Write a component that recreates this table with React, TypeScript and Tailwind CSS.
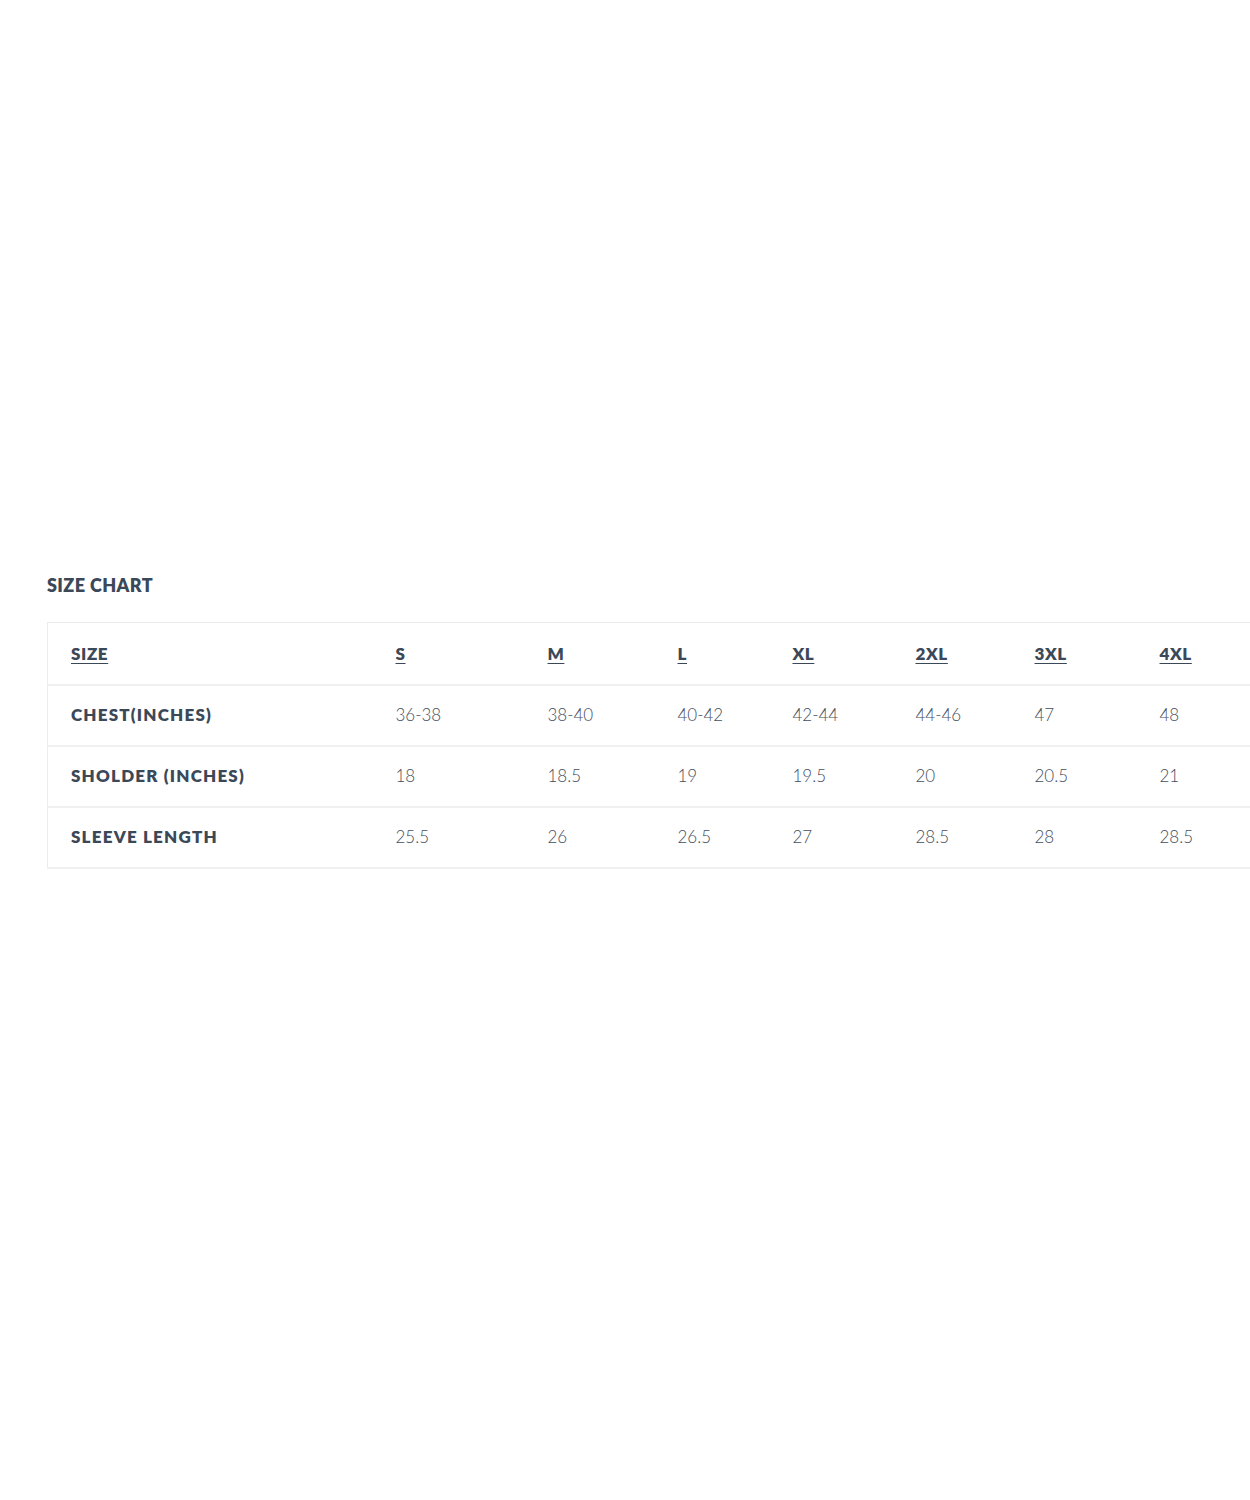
const headers = ['SIZE', 'S', 'M', 'L', 'XL', '2XL', '3XL', '4XL'];

const rows = [
  ['CHEST(INCHES)', '36-38', '38-40', '40-42', '42-44', '44-46', '47', '48'],
  ['SHOLDER (INCHES)', '18', '18.5', '19', '19.5', '20', '20.5', '21'],
  ['SLEEVE LENGTH', '25.5', '26', '26.5', '27', '28.5', '28', '28.5'],
];

// column widths read off the screenshot; last one runs past the viewport
const widths = ['w-[325px]', 'w-[152px]', 'w-[130px]', 'w-[115px]', 'w-[123px]', 'w-[119px]', 'w-[125px]', 'w-[125px]'];

export default function App() {
  return (
    <div className="min-h-[1500px] w-[1250px] overflow-hidden bg-white font-['Lato','Liberation_Sans',sans-serif] text-[#3b4858]">
      <div className="pt-[574px] pl-[47px]">
        <h2 className="text-[18px] font-extrabold leading-[22px] tracking-[0.4px] text-[#3b4858]">SIZE CHART</h2>

        <table className="mt-[26px] w-[1214px] table-fixed border-collapse border border-[#ececec]">
          <colgroup>
            {widths.map((w, i) => (
              <col key={i} className={w} />
            ))}
          </colgroup>
          <thead>
            <tr className="h-[62px] border-b-2 border-[#f0f0f0]">
              {headers.map((h) => (
                <th
                  key={h}
                  className="pl-[23px] text-left align-middle text-[17px] font-extrabold tracking-[0.6px] underline decoration-1 underline-offset-[3px] text-[#3b4858]"
                >
                  {h}
                </th>
              ))}
            </tr>
          </thead>
          <tbody>
            {rows.map((r) => (
              <tr key={r[0]} className="h-[61px] border-b-2 border-[#f0f0f0]">
                {r.map((c, i) => (
                  <td
                    key={i}
                    className={
                      i === 0
                        ? 'pl-[23px] align-middle text-[17px] font-extrabold tracking-[1.2px] text-[#3b4858]'
                        : 'pl-[23px] align-middle text-[17px] font-light text-[#454e5c]'
                    }
                  >
                    {c}
                  </td>
                ))}
              </tr>
            ))}
          </tbody>
        </table>
      </div>
    </div>
  );
}
